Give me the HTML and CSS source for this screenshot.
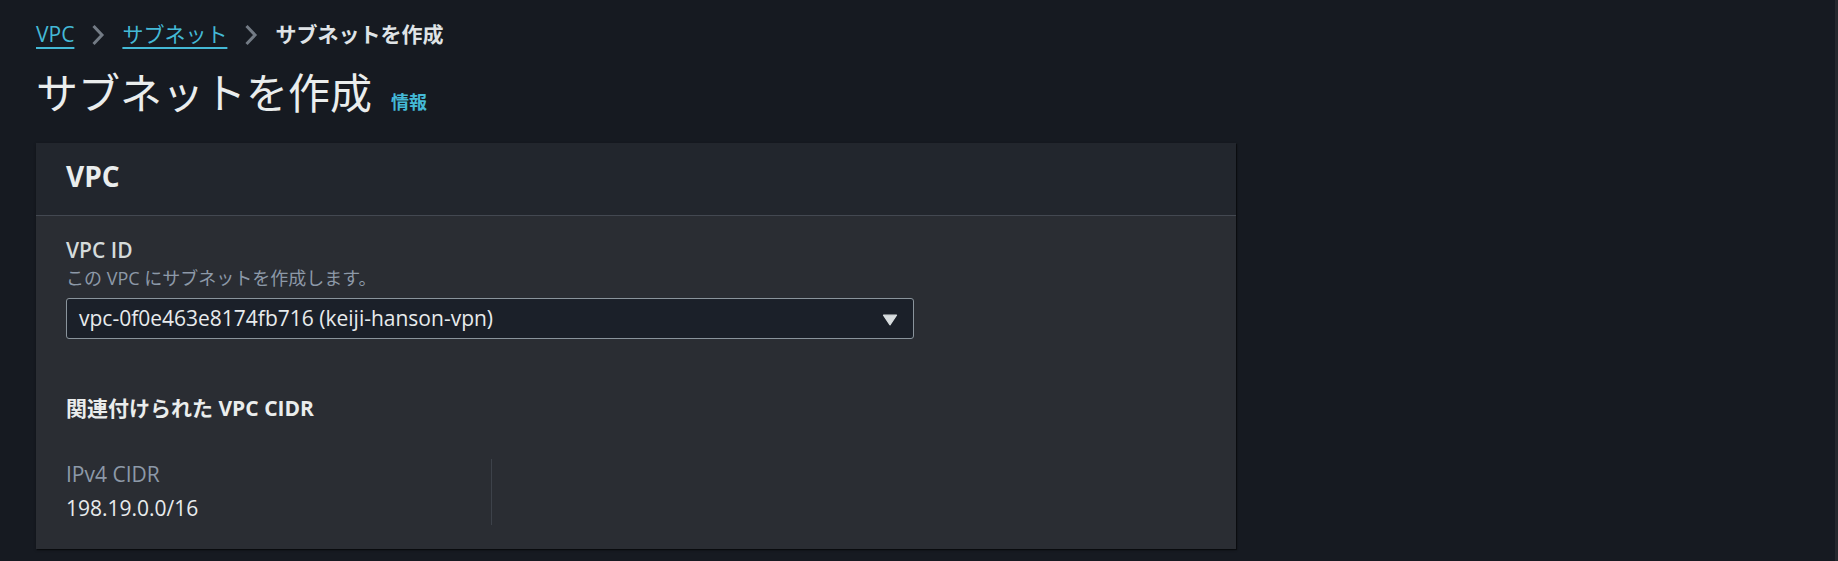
FILE: index.html
```html
<!DOCTYPE html>
<html lang="ja">
<head>
<meta charset="utf-8">
<title>サブネットを作成</title>
<link rel="stylesheet" href="styles.css">
</head>
<body>
<div class="page">
  <nav class="breadcrumbs">
    <a class="crumb-link" href="#">VPC</a>
    <svg class="chevron" width="14" height="22" viewBox="0 0 14 22"><path d="M2.5 2 L11 11 L2.5 20" fill="none" stroke="#737b85" stroke-width="3" stroke-linejoin="miter"/></svg>
    <a class="crumb-link" href="#">サブネット</a>
    <svg class="chevron" width="14" height="22" viewBox="0 0 14 22"><path d="M2.5 2 L11 11 L2.5 20" fill="none" stroke="#737b85" stroke-width="3" stroke-linejoin="miter"/></svg>
    <span class="crumb-current">サブネットを作成</span>
  </nav>

  <div class="title-row">
    <h1 class="title">サブネットを作成</h1>
    <a class="info-link" href="#">情報</a>
  </div>

  <section class="card">
    <div class="card-header">
      <h2 class="card-title">VPC</h2>
    </div>
    <div class="card-body">
      <div class="field-label">VPC ID</div>
      <div class="field-desc">この VPC にサブネットを作成します。</div>
      <div class="select">
        <span class="select-value">vpc-0f0e463e8174fb716 (keiji-hanson-vpn)</span>
        <svg class="caret" width="16" height="12" viewBox="0 0 16 12"><path d="M1.5 1.2 H14.5 L8 10.8 Z" fill="#d9dee0" stroke="#d9dee0" stroke-width="1.2" stroke-linejoin="round"/></svg>
      </div>

      <h3 class="section-title">関連付けられた VPC CIDR</h3>
      <div class="kv-grid">
        <div class="kv-col">
          <div class="kv-label">IPv4 CIDR</div>
          <div class="kv-value">198.19.0.0/16</div>
        </div>
      </div>
    </div>
  </section>
</div>
<div class="scrollbar"></div>
</body>
</html>
```

FILE: styles.css
```css
html, body {
  margin: 0;
  padding: 0;
  background: #161a21;
}

body {
  font-family: "Open Sans", "Noto Sans CJK JP", sans-serif;
  color: #d5dbdb;
  width: 1838px;
  height: 561px;
  overflow: hidden;
}

.page {
  padding-left: 36px;
}

.breadcrumbs {
  display: flex;
  align-items: center;
  padding-top: 19px;
  height: 30px;
  font-size: 21px;
  line-height: 30px;
}

.crumb-link {
  color: #44b9d6;
  text-decoration: underline;
  text-decoration-thickness: 2px;
  text-underline-offset: 5px;
}

.chevron {
  margin: 2px 17px 0 17px;
  flex: none;
}

.crumb-current {
  font-weight: 700;
  color: #dfe3e6;
}

.title-row {
  display: flex;
  align-items: baseline;
  gap: 19px;
  margin-top: 17px;
  height: 54px;
}

.title {
  margin: 0;
  font-size: 42px;
  line-height: 54px;
  font-weight: 400;
  color: #eaeded;
}

.info-link {
  font-size: 18px;
  font-weight: 700;
  color: #44b9d6;
  text-decoration: none;
}

.card {
  margin-top: 23px;
  width: 1200px;
  background: #2a2d33;
  box-shadow: 1px 1px 1px rgba(0, 0, 0, 0.45), 0 1px 3px rgba(0, 0, 0, 0.25);
}

.card-header {
  background: #22262d;
  padding: 15px 30px 21px;
  border-bottom: 1px solid #434851;
}

.card-title {
  margin: 0;
  font-size: 28px;
  line-height: 36px;
  font-weight: 700;
  color: #eaeded;
}

.card-body {
  padding: 19px 30px 24px;
}

.field-label {
  font-size: 21px;
  line-height: 30px;
  font-weight: 600;
  color: #d5dbdb;
}

.field-desc {
  font-size: 18px;
  line-height: 27px;
  color: #8d99a8;
}

.select {
  margin-top: 6px;
  width: 848px;
  height: 41px;
  box-sizing: border-box;
  border: 1px solid #8a949c;
  border-radius: 3px;
  background: #1b2029;
  display: flex;
  align-items: center;
  justify-content: space-between;
  padding: 0 15px 0 12px;
}

.select-value {
  font-size: 21px;
  line-height: 39px;
  color: #e8ebed;
}

.caret {
  flex: none;
  margin-top: 2px;
}

.section-title {
  margin: 54px 0 0;
  font-size: 21px;
  line-height: 30px;
  font-weight: 700;
  color: #eaeded;
}

.kv-grid {
  margin-top: 36px;
  display: flex;
}

.kv-col {
  width: 425px;
  border-right: 1px solid #3d424a;
  padding-bottom: 2px;
}

.kv-label {
  font-size: 21px;
  line-height: 30px;
  color: #8d99a8;
}

.kv-value {
  margin-top: 4px;
  font-size: 21px;
  line-height: 30px;
  color: #e8ebed;
}

.scrollbar {
  position: fixed;
  top: 0;
  right: 0;
  width: 3px;
  height: 561px;
  background: #25282e;
}
```
